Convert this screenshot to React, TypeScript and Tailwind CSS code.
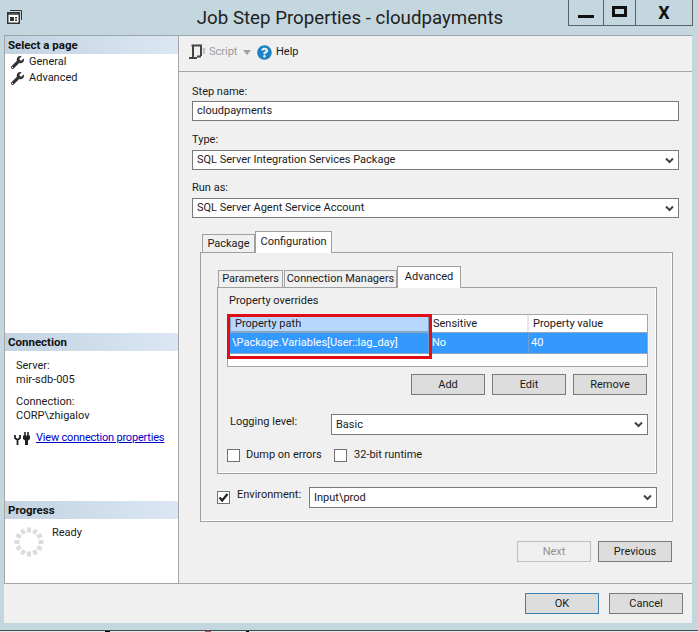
import type { ReactNode } from 'react'
import { FaQuestionCircle, FaWrench } from 'react-icons/fa'

function Chevron() {
  return (
    <svg width="9" height="7" viewBox="0 0 9 7" className="shrink-0">
      <path d="M1 1.5 L4.5 5 L8 1.5" fill="none" stroke="#444" strokeWidth="2" />
    </svg>
  )
}

function Combo({ value, className, arrow = true }: { value: string; className: string; arrow?: boolean }) {
  return (
    <div className={`flex items-center justify-between border border-[#7a7a7a] bg-white pl-[4px] pr-[4px] ${className}`}>
      <span>{value}</span>
      {arrow && <Chevron />}
    </div>
  )
}

function Btn({ children, disabled = false, accent = false }: { children: ReactNode; disabled?: boolean; accent?: boolean }) {
  const tone = disabled
    ? 'border-[#bfbfbf] bg-[#efefef] text-[#8f8f8f]'
    : accent
      ? 'border-[#3c7fb1] bg-[#dddddd]'
      : 'border-[#7a7a7a] bg-[#dddddd]'
  return <div className={`flex h-[21px] w-[74px] items-center justify-center border ${tone}`}>{children}</div>
}

function Checkbox({ checked = false }: { checked?: boolean }) {
  return (
    <div className="flex h-[13px] w-[13px] shrink-0 items-center justify-center border border-[#707070] bg-white">
      {checked && (
        <svg width="11" height="11" viewBox="0 0 11 11">
          <path d="M1.5 5.5 L4.2 8.5 L9.5 2" fill="none" stroke="#222" strokeWidth="2.2" />
        </svg>
      )}
    </div>
  )
}

function SectionHead({ children }: { children: ReactNode }) {
  return (
    <div className="flex h-[18px] items-center bg-gradient-to-r from-[#c3d3e2] to-[#dbe7f3] pl-[3px] text-[11.5px] font-bold text-[#111]">
      {children}
    </div>
  )
}

function Spinner() {
  const segments = Array.from({ length: 12 }, (_, i) => i * 30)
  return (
    <svg width="32" height="32" viewBox="0 0 32 32">
      {segments.map((angle) => (
        <rect key={angle} x="14" y="1.5" width="4" height="5" fill="#dcdcdc" transform={`rotate(${angle} 16 16)`} />
      ))}
    </svg>
  )
}

function PlugIcon() {
  return (
    <svg width="16" height="13" viewBox="0 0 16 13">
      <path d="M11 0 V4 M14 0 V4" stroke="#222" strokeWidth="1.6" fill="none" />
      <path d="M9 3.5 H16 V7 L14 8.5 V13 H11 V8.5 L9 7 Z" fill="#222" />
      <path d="M1 3 V6 L3.5 8 L6 6 V3 M3.5 8 V13" stroke="#222" strokeWidth="1.8" fill="none" />
    </svg>
  )
}

function ScriptIcon() {
  return (
    <svg width="18" height="16" viewBox="0 0 18 16">
      <path d="M3.5 1.5 H14 M5 1.5 V13 M13 1.5 V12 M1 14 H9 M9 12.5 H13" stroke="#444" strokeWidth="2" fill="none" />
      <path d="M14.5 5 H17.5 M16 5 V10" stroke="#aaa" strokeWidth="1.2" fill="none" />
    </svg>
  )
}

function WindowIcon() {
  return (
    <svg width="15" height="14" viewBox="0 0 15 14" className="absolute left-[7px] top-[10px]">
      <path d="M3 0.5 H14.5 V10" fill="none" stroke="#333" strokeWidth="1" />
      <rect x="0.75" y="2.75" width="11.5" height="10.5" fill="#fff" stroke="#333" strokeWidth="1.5" />
      <path d="M1 4 H12" stroke="#333" strokeWidth="1.5" />
      <rect x="3" y="7" width="4" height="4" fill="#333" />
      <rect x="8" y="7" width="2" height="1.5" fill="#333" />
      <rect x="8" y="9.5" width="2" height="1.5" fill="#333" />
    </svg>
  )
}

export default function App() {
  return (
    <div className="relative flex h-[632px] w-[698px] flex-col overflow-hidden bg-[#c4d6de] font-['Roboto',sans-serif] text-[11px] leading-[14px] text-[#1a1a1a]">
      <header className="flex h-[35px] shrink-0 items-center justify-center pl-[2px]">
        <WindowIcon />
        <h1 className="text-[18.7px] leading-[26px] text-[#222]">Job Step Properties - cloudpayments</h1>
        <div className="absolute right-[5px] top-0 flex h-[26px] border border-t-0 border-[#55626a]">
          <div className="flex w-[34px] items-end justify-center pb-[7px]">
            <div className="h-[3px] w-[16px] bg-[#111]" />
          </div>
          <div className="flex w-[32px] items-start justify-center border-l border-[#55626a] pt-[6px]">
            <div className="h-[11px] w-[15px] border-[3px] border-[#111]" />
          </div>
          <div className="flex w-[57px] items-center justify-center border-l border-[#55626a] text-[18px] font-bold leading-[24px] text-[#111]">
            X
          </div>
        </div>
      </header>

      <main className="ml-[4px] flex h-[588px] w-[688px] shrink-0 flex-col border-t border-[#9aa5ab] bg-[#f0f0f0]">
        <div className="flex h-[548px] border-b border-[#a6a6a6]">
          <aside className="flex w-[175px] shrink-0 flex-col border-x border-[#a6a6a6] bg-white">
            <section className="h-[297px]">
              <SectionHead>Select a page</SectionHead>
              <ul className="pl-[6px]">
                <li className="flex h-[16px] items-center gap-[5px]">
                  <FaWrench size={13} color="#333" />
                  General
                </li>
                <li className="flex h-[16px] items-center gap-[5px]">
                  <FaWrench size={13} color="#333" />
                  Advanced
                </li>
              </ul>
            </section>
            <section className="h-[168px]">
              <SectionHead>Connection</SectionHead>
              <div className="pl-[11px] pt-[8px]">
                <p>Server:</p>
                <p>mir-sdb-005</p>
                <p className="mt-[8px]">Connection:</p>
                <p>CORP\zhigalov</p>
                <div className="-ml-[2px] mt-[8px] flex items-center gap-[6px]">
                  <PlugIcon />
                  <span className="whitespace-nowrap tracking-[-0.2px] text-[#0000c8] underline">View connection properties</span>
                </div>
              </div>
            </section>
            <section>
              <SectionHead>Progress</SectionHead>
              <div className="flex gap-[7px] pl-[8px] pt-[7px]">
                <Spinner />
                <span>Ready</span>
              </div>
            </section>
          </aside>

          <div className="flex min-w-0 flex-1 flex-col">
            <div className="flex h-[36px] shrink-0 items-center border-b border-[#a6a6a6] pb-[3px] pl-[9px]">
              <ScriptIcon />
              <span className="ml-[3px] w-[27px] text-[#9a9a9a]">Script</span>
              <svg width="8" height="5" viewBox="0 0 8 5" className="ml-[7px]">
                <path d="M0 0 H8 L4 5 Z" fill="#a0a0a0" />
              </svg>
              <FaQuestionCircle size={15} color="#1c84c6" className="ml-[6px]" />
              <span className="ml-[4px]">Help</span>
            </div>

            <div className="pl-[13px] pt-[13px]">
              <label className="block">Step name:</label>
              <Combo value="cloudpayments" arrow={false} className="mt-[2px] h-[20px] w-[487px]" />
              <label className="mt-[12px] block">Type:</label>
              <Combo value="SQL Server Integration Services Package" className="mt-[3px] h-[20px] w-[487px]" />
              <label className="mt-[11px] block">Run as:</label>
              <Combo value="SQL Server Agent Service Account" className="mt-[3px] h-[20px] w-[487px]" />

              <div className="ml-[8px] mt-[13px] w-[473px]">
                <div className="relative z-10 flex h-[21px] items-end pl-[2px]">
                  <div className="flex h-[18px] w-[53px] items-center justify-center border border-b-0 border-[#a0a0a0] bg-[#f0f0f0]">
                    Package
                  </div>
                  <div className="-mb-[1px] flex h-[22px] w-[77px] items-start justify-center border border-b-0 border-[#a0a0a0] bg-white pt-[3px]">
                    Configuration
                  </div>
                </div>
                <div className="h-[270px] border border-[#a0a0a0] bg-white pb-px pr-px">
                  <div className="h-full bg-[#f0f0f0] pl-[16px] pt-[13px]">
                    <div className="relative z-10 flex h-[21px] items-end pl-[1px]">
                      <div className="flex h-[17px] w-[65px] items-center justify-center border border-b-0 border-[#a0a0a0] bg-[#f0f0f0]">
                        Parameters
                      </div>
                      <div className="ml-px flex h-[17px] w-[113px] items-center justify-center whitespace-nowrap border border-b-0 border-[#a0a0a0] bg-[#f0f0f0]">
                        Connection Managers
                      </div>
                      <div className="-mb-[1px] flex h-[22px] w-[64px] items-start justify-center border border-b-0 border-[#a0a0a0] bg-white pt-[3px]">
                        Advanced
                      </div>
                    </div>
                    <div className="h-[187px] w-[440px] border border-[#a0a0a0] bg-white pb-px pr-px">
                      <div className="h-full bg-[#f0f0f0] pl-[9px] pt-[6px]">
                        <p className="pl-[2px]">Property overrides</p>
                        <div className="relative mt-[6px] h-[53px] w-[421px] border border-[#a6a6a6] bg-white">
                          <div className="flex h-[17px]">
                            <div className="ml-[2px] flex w-[199px] items-center border border-[#7fa6c9] bg-[#b9d7fc] pl-[4px] pt-px">
                              Property path
                            </div>
                            <div className="flex w-[100px] items-center border-r-2 border-[#e6e6e6] pl-[4px] pt-px">Sensitive</div>
                            <div className="flex flex-1 items-center pl-[4px] pt-px">Property value</div>
                          </div>
                          <div className="flex h-[22px] border-y border-[#8fa8c0] bg-[#3399ff] text-white">
                            <div className="flex w-[201px] items-center border-r border-[#6f9fd0] pl-[4px]">
                              \Package.Variables[User::lag_day]
                            </div>
                            <div className="flex w-[100px] items-center border-r border-[#6f9fd0] pl-[3px]">No</div>
                            <div className="flex flex-1 items-center pl-[2px]">40</div>
                          </div>
                          <div className="pointer-events-none absolute -left-[1px] -top-[1px] h-[45px] w-[205px] border-[3px] border-[#e00e16]" />
                        </div>
                        <div className="ml-[184px] mt-[7px] flex gap-[7px] [&>div]:pt-px">
                          <Btn>Add</Btn>
                          <Btn>Edit</Btn>
                          <Btn>Remove</Btn>
                        </div>
                        <div className="mt-[19px] flex items-center pl-[3px]">
                          <span className="w-[101px] -translate-y-[3px]">Logging level:</span>
                          <Combo value="Basic" className="h-[21px] w-[317px]" />
                        </div>
                        <div className="mt-[13px] flex items-center">
                          <Checkbox />
                          <span className="ml-[6px] w-[88px]">Dump on errors</span>
                          <Checkbox />
                          <span className="ml-[7px]">32-bit runtime</span>
                        </div>
                      </div>
                    </div>
                    <div className="mt-[13px] flex items-center">
                      <Checkbox checked />
                      <span className="ml-[7px] w-[72px] -translate-y-[3px]">Environment:</span>
                      <Combo value="Input\prod" className="h-[21px] w-[348px]" />
                    </div>
                  </div>
                </div>
              </div>

              <div className="ml-[325px] mt-[19px] flex gap-[7px] [&>div]:pt-px">
                <Btn disabled>Next</Btn>
                <Btn>Previous</Btn>
              </div>
            </div>
          </div>
        </div>
        <div className="flex flex-1 justify-end gap-[10px] pr-[9px] pt-[9px]">
          <Btn accent>OK</Btn>
          <Btn>Cancel</Btn>
        </div>
      </main>
      <div className="mt-[7px] h-px shrink-0 bg-[#3c4a52]" />
      <div className="flex h-px shrink-0 bg-[#e8e8e8] pl-[105px]">
        <div className="w-[5px] bg-black" />
        <div className="ml-[95px] w-[6px] bg-[#b05050]" />
        <div className="ml-[35px] w-[3px] bg-black" />
      </div>
    </div>
  )
}
